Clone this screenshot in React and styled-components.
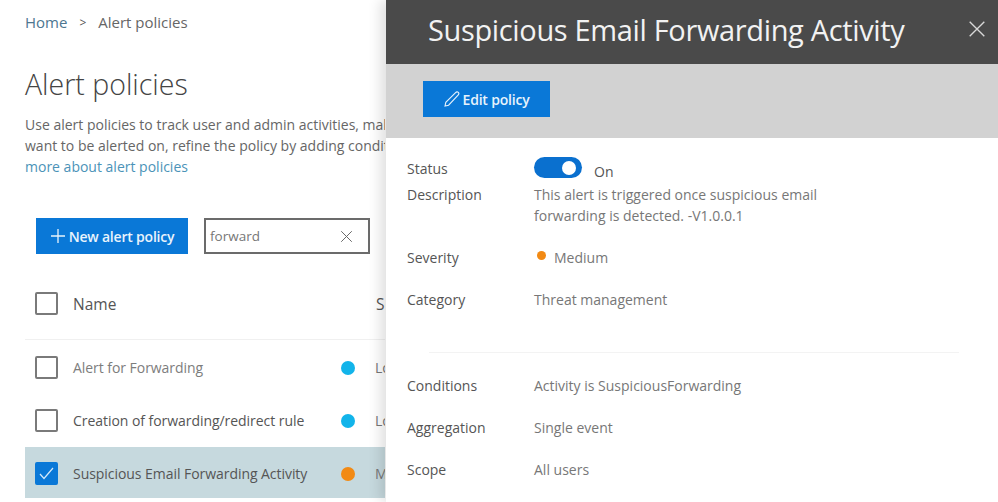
import React from "react";
import styled, { createGlobalStyle } from "styled-components";

const GlobalStyle = createGlobalStyle`
  html, body { margin: 0; padding: 0; background: #fff; }
  body { font-family: "Open Sans", "Liberation Sans", sans-serif; }
`;

const Page = styled.div`
  position: relative;
  width: 998px;
  height: 502px;
  overflow: hidden;
  background: #fff;
`;

const Main = styled.div`
  width: 385px;
  height: 502px;
  overflow: hidden;
  padding: 13px 0 0 25px;
  box-sizing: border-box;
`;

const Breadcrumb = styled.div`
  display: flex;
  align-items: center;
  height: 18px;
  font-size: 15px;
  color: #666;
  white-space: nowrap;
`;

const Crumb = styled.span`
  color: #4d7690;
`;

const Sep = styled.span`
  margin: 0 12px 0 12px;
  color: #555;
  font-size: 12px;
`;

const Title = styled.h1`
  margin: 31px 0 0;
  font-size: 28.5px;
  line-height: 44px;
  font-weight: 300;
  color: #444;
  white-space: nowrap;
`;

const Intro = styled.div`
  margin-top: 8px;
  font-size: 14px;
  line-height: 21px;
  color: #666;
  white-space: nowrap;
`;

const Link = styled.div`
  color: #4b93b8;
`;

const Controls = styled.div`
  display: flex;
  gap: 16px;
  margin: 41px 0 0 11px;
`;

const PrimaryButton = styled.button`
  display: flex;
  align-items: center;
  justify-content: center;
  gap: 3px;
  width: ${({ $w }) => $w}px;
  height: 36px;
  padding: 0;
  border: none;
  background: #0a78d7;
  color: #e8f3fc;
  font-family: inherit;
  font-size: 14px;
  font-weight: 600;
  letter-spacing: -0.2px;
`;

const SearchBox = styled.div`
  display: flex;
  align-items: center;
  justify-content: space-between;
  width: 166px;
  height: 36px;
  padding: 0 15px 0 4px;
  box-sizing: border-box;
  border: 2px solid #6b6b6b;
  font-size: 13.5px;
  color: #777;
`;

const HeaderRow = styled.div`
  display: flex;
  align-items: center;
  height: 69px;
  margin: 15px 0 1px;
  padding: 0 0 1px 10px;
  border-bottom: 1px solid #f0f0f0;
  font-size: 15.5px;
  font-weight: 500;
  color: #555;
  white-space: nowrap;
`;

const Row = styled.div`
  display: flex;
  align-items: center;
  box-sizing: border-box;
  height: ${({ $selected }) => ($selected ? 51 : 53)}px;
  padding: ${({ $selected }) => ($selected ? "2px" : "0")} 0 0 10px;
  font-size: 14px;
  letter-spacing: -0.05px;
  white-space: nowrap;
  color: ${({ $muted }) => ($muted ? "#7d7d7d" : "#555")};
  background: ${({ $selected }) => ($selected ? "#c6d9de" : "transparent")};
`;

const Box = styled.span`
  display: flex;
  align-items: center;
  justify-content: center;
  flex: none;
  width: 23px;
  height: 23px;
  box-sizing: border-box;
  margin-right: 15px;
  border: 2px solid ${({ $checked }) => ($checked ? "#0a78d7" : "#7a7a7a")};
  border-radius: 2px;
  background: ${({ $checked }) => ($checked ? "#0a78d7" : "transparent")};
`;

const Name = styled.span`
  flex: none;
  width: ${({ $w }) => $w}px;
`;

const Dot = styled.span`
  flex: none;
  width: ${({ $size }) => $size}px;
  height: ${({ $size }) => $size}px;
  border-radius: 50%;
  background: ${({ $color }) => $color};
`;

const SeverityDot = styled(Dot)`
  margin: -4px 8px 0 3px;
`;

const Level = styled.span`
  margin-left: 20px;
  color: #777;
`;

const Panel = styled.aside`
  position: absolute;
  top: 0;
  right: 0;
  bottom: 0;
  width: 612px;
  background: #fff;
  box-shadow: -6px 0 12px rgba(0, 0, 0, 0.12);
`;

const PanelHeader = styled.div`
  display: flex;
  align-items: center;
  justify-content: space-between;
  box-sizing: border-box;
  height: 64px;
  padding: 0 12px 6px 42px;
  background: #4a4a4a;
  color: #f2f2f2;
`;

const PanelTitle = styled.h2`
  margin: 0;
  font-size: 29px;
  font-weight: 400;
  letter-spacing: -0.35px;
  white-space: nowrap;
`;

const PanelBar = styled.div`
  display: flex;
  align-items: center;
  box-sizing: border-box;
  height: 74px;
  padding: 0 0 4px 37px;
  background: #d2d2d2;
`;

const Details = styled.div`
  padding: 20px 0 0 21px;
  font-size: 14px;
`;

const Field = styled.div`
  display: grid;
  grid-template-columns: 127px 1fr;
  align-items: start;
  min-height: ${({ $h }) => $h}px;
  line-height: 21px;
`;

const Label = styled.span`
  color: #555;
  font-weight: 500;
`;

const Value = styled.span`
  display: flex;
  align-items: center;
  color: #777;
`;

const Toggle = styled.span`
  position: relative;
  display: inline-block;
  align-self: flex-start;
  width: 48px;
  height: 21px;
  margin: -1px 12px 0 0;
  border-radius: 11px;
  background: #0a70cf;

  &::after {
    content: "";
    position: absolute;
    top: 4px;
    right: 6px;
    width: 14px;
    height: 14px;
    border-radius: 50%;
    background: #fff;
  }
`;

const OnText = styled.span`
  margin-top: 3px;
  color: #555;
`;

const Divider = styled.div`
  height: 1px;
  margin: 21px 39px 22px 22px;
  background: #f3f3f3;
`;

const Plus = () => (
  <svg width="16" height="16" viewBox="0 0 16 16" stroke="#e8f3fc" strokeWidth="1.3" fill="none">
    <path d="M8 1v14M1 8h14" />
  </svg>
);

const Cross = ({ size, color }) => (
  <svg width={size} height={size} viewBox="0 0 16 16" stroke={color} strokeWidth="1.2" fill="none">
    <path d="M1.5 1.5l13 13M14.5 1.5l-13 13" />
  </svg>
);

const Pencil = () => (
  <svg width="16" height="16" viewBox="0 0 16 16" stroke="#e8f3fc" strokeWidth="1.1" fill="none">
    <path d="M1 15l.8-3.6L11.6 1.6c.9-.9 2-.9 2.7-.2.7.7.7 1.8-.2 2.7L4.6 14.2z" />
  </svg>
);

const Check = () => (
  <svg width="15" height="13" viewBox="0 0 15 13" stroke="#d5e9fa" strokeWidth="1.2" fill="none">
    <path d="M1 7l4 4.5L14 1" />
  </svg>
);

const policies = [
  { name: "Alert for Forwarding", level: "Low", color: "#12b4ea", muted: true },
  { name: "Creation of forwarding/redirect rule", level: "Low", color: "#12b4ea" },
  { name: "Suspicious Email Forwarding Activity", level: "Medium", color: "#f28a14", selected: true },
];

export default function App() {
  return (
    <Page>
      <GlobalStyle />
      <Main>
        <Breadcrumb>
          <Crumb>Home</Crumb>
          <Sep>&gt;</Sep>
          Alert policies
        </Breadcrumb>
        <Title>Alert policies</Title>
        <Intro>
          <div>Use alert policies to track user and admin activities, make sure you</div>
          <div>want to be alerted on, refine the policy by adding conditions and</div>
          <Link>more about alert policies</Link>
        </Intro>
        <Controls>
          <PrimaryButton $w={152}>
            <Plus />
            New alert policy
          </PrimaryButton>
          <SearchBox>
            forward
            <Cross size={13} color="#666" />
          </SearchBox>
        </Controls>
        <HeaderRow>
          <Box />
          <Name $w={303}>Name</Name>
          Severity
        </HeaderRow>
        {policies.map((p) => (
          <Row key={p.name} $muted={p.muted} $selected={p.selected}>
            <Box $checked={p.selected}>{p.selected && <Check />}</Box>
            <Name $w={268}>{p.name}</Name>
            <Dot $size={14} $color={p.color} />
            <Level>{p.level}</Level>
          </Row>
        ))}
      </Main>
      <Panel>
        <PanelHeader>
          <PanelTitle>Suspicious Email Forwarding Activity</PanelTitle>
          <Cross size={18} color="#d8d8d8" />
        </PanelHeader>
        <PanelBar>
          <PrimaryButton $w={127}>
            <Pencil />
            Edit policy
          </PrimaryButton>
        </PanelBar>
        <Details>
          <Field $h={26}>
            <Label>Status</Label>
            <Value>
              <Toggle />
              <OnText>On</OnText>
            </Value>
          </Field>
          <Field $h={63}>
            <Label>Description</Label>
            <span>
              <Value>This alert is triggered once suspicious email</Value>
              <Value>forwarding is detected. -V1.0.0.1</Value>
            </span>
          </Field>
          <Field $h={42}>
            <Label>Severity</Label>
            <Value>
              <SeverityDot $size={9} $color="#f28a14" />
              Medium
            </Value>
          </Field>
          <Field $h={42}>
            <Label>Category</Label>
            <Value>Threat management</Value>
          </Field>
          <Divider />
          <Field $h={42}>
            <Label>Conditions</Label>
            <Value>Activity is SuspiciousForwarding</Value>
          </Field>
          <Field $h={42}>
            <Label>Aggregation</Label>
            <Value>Single event</Value>
          </Field>
          <Field $h={42}>
            <Label>Scope</Label>
            <Value>All users</Value>
          </Field>
        </Details>
      </Panel>
    </Page>
  );
}
